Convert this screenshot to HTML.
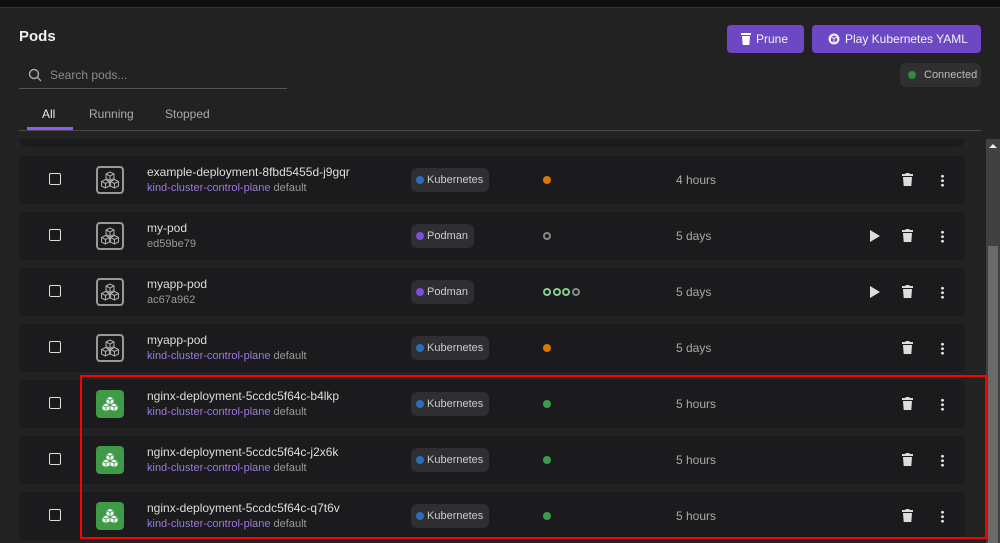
<!DOCTYPE html>
<html><head><style>
*{margin:0;padding:0;box-sizing:border-box}
body{width:1000px;height:543px;background:#222222;font-family:"Liberation Sans","DejaVu Sans",sans-serif;position:relative;overflow:hidden;color:#ddd}
.top{position:absolute;left:0;top:0;width:1000px;height:8px;background:#0f0f12;border-bottom:1px solid #333}
h1{position:absolute;left:19px;top:28px;font-size:15px;font-weight:bold;color:#f0f0f0}
.search{position:absolute;left:19px;top:62px;width:268px;height:27px;border-bottom:1px solid #555}
.search span{position:absolute;left:31px;top:6px;font-size:12px;color:#8a8a8a}
.btn{position:absolute;top:25px;height:28px;background:#6d48c4;border-radius:4px;color:#f2f2f2;font-size:12px;line-height:28px}
.conn{position:absolute;left:900px;top:63px;width:81px;height:24px;background:#303033;border-radius:6px;font-size:11px;color:#bbb;line-height:24px;padding-left:24px}
.conn:before{content:"";position:absolute;left:8px;top:8px;width:8px;height:8px;border-radius:50%;background:#2e8b3e}
.tab{position:absolute;top:107px;font-size:12px;color:#aaa}
.line{position:absolute;left:19px;top:130px;width:962px;height:1px;background:#4a4a4a}
.ul{position:absolute;left:27px;top:127px;width:46px;height:3px;background:#8b5cf6}
.clip{position:absolute;left:0;top:139px;width:986px;height:404px;overflow:hidden}
.row{position:absolute;left:19px;width:946px;height:48px;background:#1b1b1d;border-radius:8px}
.cb{position:absolute;left:30px;top:17px;width:12px;height:12px;border:1.5px solid #ddd;border-radius:2px}
.ic{position:absolute;left:77px;top:10px;width:28px;height:28px;border:2px solid #999;border-radius:4px;overflow:hidden}
.ic.g{background:#3f9a47;border:none}
.ic svg{position:absolute;left:50%;top:50%;transform:translate(-50%,-50%)}
.nm{position:absolute;left:128px;top:9px;font-size:12px;color:#ddd}
.sub{position:absolute;left:128px;top:26px;font-size:11px;color:#999}
.sub b{font-weight:normal;color:#9a7ae0}
.pill{position:absolute;left:392px;top:12px;height:24px;background:#2f2f33;border-radius:6px;font-size:11px;color:#ccc;line-height:24px;padding:0 6px 0 16px}
.pill:before{content:"";position:absolute;left:5px;top:8px;width:8px;height:8px;border-radius:50%;background:var(--c)}
.dot{position:absolute;top:20px;width:8px;height:8px;border-radius:50%}
.age{position:absolute;left:657px;top:17px;font-size:12px;color:#aaa}
.tr{position:absolute;left:883px;top:17px}
.more{position:absolute;left:922px;top:18px;width:3px;height:13px;background:radial-gradient(circle,#ddd 1.3px,transparent 1.6px) 0 0/3px 4.5px}
.play{position:absolute;left:851px;top:18px;width:0;height:0;border-left:10px solid #ddd;border-top:6px solid transparent;border-bottom:6px solid transparent}
.sb{position:absolute;left:986px;top:139px;width:14px;height:404px;background:#414141}
.th{position:absolute;left:988px;top:246px;width:10px;height:297px;background:#6a6a6a}
.red{position:absolute;left:80px;top:375px;width:907px;height:164px;border:2px solid #f00}
</style></head><body>
<div class="top"></div>
<h1>Pods</h1>
<div class="search"><svg style="position:absolute;left:9px;top:6px" width="14" height="14" viewBox="0 0 14 14"><circle cx="6" cy="6" r="4.5" fill="none" stroke="#aaa" stroke-width="1.4"/><path d="M9.3 9.3L13 13" stroke="#aaa" stroke-width="1.4"/></svg><span>Search pods...</span></div>
<div class="btn" style="left:727px;width:77px;padding-left:29px"><svg style="position:absolute;left:14px;top:8px" width="10" height="12" viewBox="0 0 10 12"><rect x="0" y="0" width="10" height="2" fill="#fff"/><path d="M1 3h8l-0.7 9H1.7z" fill="#fff"/></svg>Prune</div>
<div class="btn" style="left:812px;width:169px;padding-left:33px"><svg style="position:absolute;left:16px;top:8px" width="12" height="12" viewBox="0 0 12 12"><circle cx="6" cy="6" r="5.5" fill="#eee"/><path d="M3 4l3-1.5 3 1.5v4l-3 1.5-3-1.5z" fill="#6d48c4"/><path d="M3 4l3 1.5 3-1.5M6 5.5v4" stroke="#eee" fill="none"/></svg>Play Kubernetes YAML</div>
<div class="conn">Connected</div>
<div class="tab" style="left:42px;color:#eee">All</div>
<div class="tab" style="left:89px">Running</div>
<div class="tab" style="left:165px">Stopped</div>
<div class="line"></div><div class="ul"></div>
<div class="clip">
<div class="row" style="top:-40px"></div>
</div>
<div id="rows"></div>
<div class="sb"></div><div class="th"></div>
<svg style="position:absolute;left:988px;top:143px" width="10" height="6"><path d="M1 5L5 1L9 5Z" fill="#eee"/></svg>
<div class="red"></div>
<script>
const cubes='<path d="M10 3l4-2 4 2v4.5l-4 2-4-2z"/><path d="M5.5 10.5l4-2 4 2v4.5l-4 2-4-2z"/><path d="M14.5 10.5l4-2 4 2v4.5l-4 2-4-2z"/>';
const cube='<svg width="20" height="18" viewBox="4.5 0 19 18"><g fill="none" stroke="#aaa" stroke-width="1.1" stroke-linejoin="round">'+cubes+'<path d="M10 3l4 2 4-2M14 5v4.5M5.5 10.5l4 2 4-2M9.5 12.5v4.5M14.5 10.5l4 2 4-2M18.5 12.5v4.5"/></g></svg>';
const cubeW='<svg width="18" height="16" viewBox="4.5 0 19 18"><g fill="#fff">'+cubes+'</g><g stroke="#3f9a47" stroke-width="1" fill="none"><path d="M10 3l4 2 4-2M14 5v4.5M5.5 10.5l4 2 4-2M9.5 12.5v4.5M14.5 10.5l4 2 4-2M18.5 12.5v4.5"/></g></svg>';
const R=[
["example-deployment-8fbd5455d-j9gqr","kind-cluster-control-plane","default","Kubernetes","o","4 hours",0,0],
["my-pod","ed59be79","","Podman","g","5 days",1,0],
["myapp-pod","ac67a962","","Podman","m","5 days",1,0],
["myapp-pod","kind-cluster-control-plane","default","Kubernetes","o","5 days",0,0],
["nginx-deployment-5ccdc5f64c-b4lkp","kind-cluster-control-plane","default","Kubernetes","gr","5 hours",0,1],
["nginx-deployment-5ccdc5f64c-j2x6k","kind-cluster-control-plane","default","Kubernetes","gr","5 hours",0,1],
["nginx-deployment-5ccdc5f64c-q7t6v","kind-cluster-control-plane","default","Kubernetes","gr","5 hours",0,1]];
let h='';
R.forEach((r,i)=>{const t=156+i*56;
let st='';
if(r[4]=='o')st='<div class="dot" style="left:524px;background:#d97706"></div>';
if(r[4]=='gr')st='<div class="dot" style="left:524px;background:#3f9a47"></div>';
if(r[4]=='g')st='<div class="dot" style="left:524px;border:2px solid #888"></div>';
if(r[4]=='m')st=['#86cf8a','#86cf8a','#86cf8a','#888'].map((c,k)=>`<div class="dot" style="left:${524+k*9.5}px;border:2px solid ${c}"></div>`).join('');
h+=`<div class="row" style="top:${t}px"><div class="cb"></div><div class="ic${r[7]?' g':''}">${r[7]?cubeW:cube}</div>
<div class="nm">${r[0]}</div><div class="sub">${r[2]?'<b>'+r[1]+'</b> '+r[2]:r[1]}</div>
<div class="pill" style="--c:${r[3]=='Podman'?'#7c4fd6':'#2a6fb8'}">${r[3]}</div>${st}
<div class="age">${r[5]}</div>${r[6]?'<div class="play"></div>':''}
<svg class="tr" width="11" height="13" viewBox="0 0 11 13"><rect x="0" y="1" width="11" height="2" fill="#ddd"/><rect x="3.5" y="0" width="4" height="1.5" fill="#ddd"/><path d="M1 4h9l-0.7 9H1.7z" fill="#ddd"/></svg>
<div class="more"></div></div>`});
document.getElementById('rows').innerHTML=h;
</script>
</body></html>
